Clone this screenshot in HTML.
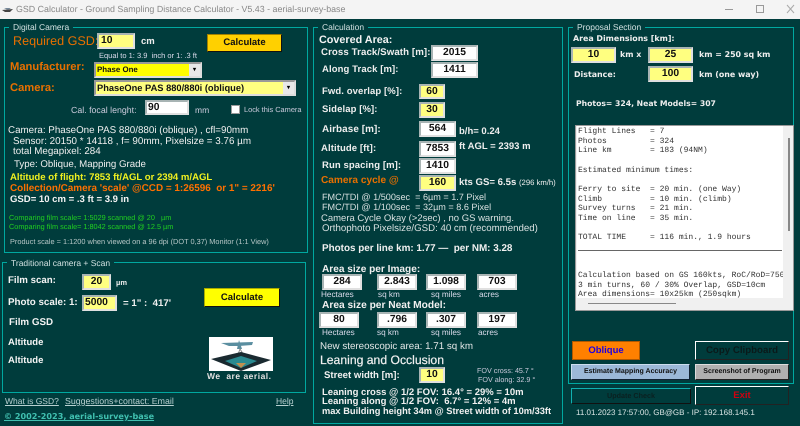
<!DOCTYPE html>
<html><head><meta charset="utf-8"><style>
html,body{margin:0;padding:0}
body{width:800px;height:426px;overflow:hidden;background:#003c3c;position:relative;font-family:"Liberation Sans",sans-serif;color:#fff;text-rendering:geometricPrecision}
.t{position:absolute;white-space:nowrap;line-height:1}
.b{font-weight:bold}
.o{color:#e87000}
.v{font-family:"DejaVu Sans",sans-serif;font-weight:bold;font-size:7.9px;color:#eee}
.p{position:absolute;border:1px solid #00a8a0;box-sizing:border-box}
.l{position:absolute;background:#003c3c;color:#d0e0e0;font-size:8.5px;line-height:1;padding:0 4px;white-space:nowrap}
.i{position:absolute;box-sizing:border-box;background:#fff;border:2px solid;border-color:#a8b4b4 #e0e0e0 #e0e0e0 #a8b4b4;color:#111;font-weight:bold;font-size:10.3px;text-align:center;white-space:nowrap}
.y{background:#ffff80}
.btn{position:absolute;box-sizing:border-box;text-align:center;font-weight:bold;white-space:nowrap}
.s{position:absolute;box-sizing:border-box;border:2px solid;border-color:#999 #ddd #ddd #999;color:#111;font-weight:bold;font-size:9.3px;line-height:12px;padding-left:1px;white-space:nowrap}
.ar{position:absolute;right:0;top:0;bottom:0;width:11px;background:#e8e8e8;text-align:center;font-size:6px;line-height:13px;color:#000}
.m{font-weight:bold;font-size:9.500px;color:#eee;letter-spacing:.1px}
u{text-decoration:underline}
</style></head><body>
<div style="position:absolute;left:0;top:0;width:800px;height:19px;background:#f4f4f4"></div>
<svg style="position:absolute;left:1px;top:4px" width="14" height="11"><path d="M1 6 L12 5 L9 8 L4 8Z" fill="#444"/><path d="M3 4 L10 4 L7 6Z" fill="#789"/></svg>
<div class="t" style="left:16px;top:5px;font-size:8.870px;color:#888">GSD Calculator - Ground Sampling Distance Calculator - V5.43 - aerial-survey-base</div>
<svg style="position:absolute;left:720px;top:3px" width="76" height="13"><path d="M5 6.5H13" stroke="#999" fill="none"/><rect x="36.500" y="2.500" width="7" height="7" stroke="#999" fill="none"/><path d="M67 2 L74 10 M74 2 L67 10" stroke="#aaa" fill="none"/></svg>

<!-- Digital Camera -->
<div class="p" style="left:4px;top:27px;width:304px;height:226px"></div>
<div class="l" style="left:9px;top:23px">Digital Camera</div>
<div class="t o" style="left:13px;top:35px;font-size:12.600px">Required GSD:</div>
<div class="i y" style="left:97px;top:33px;width:38px;height:16px;line-height:12px;text-align:left;padding-left:2px">10</div>
<div class="t b" style="left:141px;top:37px;font-size:9.500px;color:#eee">cm</div>
<div class="btn" style="left:207px;top:34px;width:75px;height:18px;background:#ffd000;border:1px solid #222;border-color:#a08000 #111 #111 #a08000;color:#111;font-size:9.500px;line-height:16px">Calculate</div>
<div class="t" style="left:99px;top:52px;font-size:7.500px;color:#dde">Equal to 1: 3.9&nbsp; inch or 1: .3 ft</div>
<div class="t b o" style="left:10px;top:62px;font-size:11.200px">Manufacturer:</div>
<div class="s" style="left:94px;top:62px;width:108px;height:16px;background:#ffff00;font-size:7.900px">Phase One<span class="ar">&#9662;</span></div>
<div class="t b o" style="left:10px;top:83px;font-size:11.200px">Camera:</div>
<div class="s" style="left:94px;top:80px;width:202px;height:16px;background:#ffff80">PhaseOne PAS 880/880i (oblique)<span class="ar">&#9662;</span></div>
<div class="t" style="left:71px;top:106px;font-size:8.800px;color:#ccd">Cal. focal lenght:</div>
<div class="i" style="left:145px;top:100px;width:44px;height:15px;line-height:11px;text-align:left;padding-left:1px">90</div>
<div class="t" style="left:195px;top:106px;font-size:8.500px;color:#ccd">mm</div>
<div style="position:absolute;left:231px;top:105px;width:9px;height:9px;background:#fff;border:1px solid #999;box-sizing:border-box"></div>
<div class="t" style="left:244px;top:106px;font-size:7.400px;color:#ccd">Lock this Camera</div>

<div class="t" style="left:8px;top:126px;font-size:9.800px;color:#f0f0f0">Camera: PhaseOne PAS 880/880i (oblique) , cfl=90mm</div>
<div class="t" style="left:13px;top:137px;font-size:9.850px;color:#f0f0f0">Sensor: 20150 * 14118 , f= 90mm, Pixelsize = 3.76 &micro;m</div>
<div class="t" style="left:13px;top:147px;font-size:9.800px;color:#f0f0f0">total Megapixel: 284</div>
<div class="t" style="left:14px;top:160px;font-size:9.700px;color:#f0f0f0">Type: Oblique, Mapping Grade</div>
<div class="t b" style="left:10px;top:173px;font-size:9.570px;color:#f0f020">Altitude of flight: 7853 ft/AGL or 2394 m/AGL</div>
<div class="t b" style="left:10px;top:184px;font-size:9.920px;color:#ff7000">Collection/Camera 'scale' @CCD = 1:26596&nbsp; or 1" = 2216'</div>
<div class="t b" style="left:10px;top:195px;font-size:9.550px;color:#f4f4f4">GSD= 10 cm = .3 ft = 3.9 in</div>
<div class="t" style="left:9px;top:214px;font-size:7.300px;color:#20d020">Comparing film scale= 1:5029 scanned @ 20&nbsp;&nbsp; &micro;m</div>
<div class="t" style="left:9px;top:223px;font-size:7.300px;color:#20d020">Comparing film scale= 1:8042 scanned @ 12.5 &micro;m</div>
<div class="t" style="left:10px;top:238px;font-size:7.360px;color:#b8c8c8">Product scale = 1:1200 when viewed on a 96 dpi (DOT 0,37) Monitor (1:1 View)</div>

<!-- Traditional -->
<div class="p" style="left:2px;top:262px;width:304px;height:131px"></div>
<div class="l" style="left:7px;top:259px">Traditional camera + Scan</div>
<div class="t b" style="left:8px;top:276px;font-size:9.700px;color:#f4f4f4">Film scan:</div>
<div class="i y" style="left:82px;top:274px;width:29px;height:16px;line-height:12px">20</div>
<div class="t b" style="left:116px;top:279px;font-size:7.500px;color:#eee">&micro;m</div>
<div class="t b" style="left:8px;top:298px;font-size:9.800px;color:#f4f4f4">Photo scale: 1:</div>
<div class="i y" style="left:82px;top:295px;width:35px;height:16px;line-height:12px;text-align:left;padding-left:1px">5000</div>
<div class="t b" style="left:123px;top:299px;font-size:9.700px;color:#eee">= 1" :&nbsp; 417'</div>
<div class="btn" style="left:204px;top:288px;width:76px;height:19px;background:#ffff00;border:1px solid #111;border-color:#aa0 #111 #111 #aa0;color:#111;font-size:9.500px;line-height:17px">Calculate</div>
<div class="t b" style="left:9px;top:318px;font-size:9.800px;color:#f4f4f4">Film GSD</div>
<div class="t b" style="left:8px;top:338px;font-size:9.500px;color:#f4f4f4">Altitude</div>
<div class="t b" style="left:8px;top:356px;font-size:9.500px;color:#f4f4f4">Altitude</div>
<svg style="position:absolute;left:209px;top:337px" width="64" height="34"><rect width="64" height="34" fill="#fff"/><path d="M12 6 L44 5 L43 8 L30 9 L20 9Z" fill="#5a8ea0"/><path d="M30 3 L33 12 L28 12Z" fill="#5a8ea0"/><path d="M31 12 L28 20 H36Z" fill="none" stroke="#888"/><path d="M2 22 L32 15 L62 23 L32 34Z" fill="#1a2a30"/><path d="M16 24 L32 19 L48 24 L32 31Z" fill="#2a8a90"/><path d="M27 26 H37 L32 31Z" fill="#c09050"/></svg>
<div class="t b" style="left:207px;top:372px;font-size:8.500px;color:#e0e0e0;letter-spacing:.5px">We&nbsp; are aerial.</div>

<div class="t" style="left:5px;top:397px;font-size:8.500px;color:#b8d0d0"><u>What is GSD?</u></div>
<div class="t" style="left:65px;top:397px;font-size:8.800px;color:#b8d0d0"><u>Suggestions+contact: Email</u></div>
<div class="t" style="left:276px;top:397px;font-size:8.500px;color:#b8d0d0"><u>Help</u></div>
<div class="t v" style="left:4px;top:412px;font-size:8.100px;color:#40c0b0"><u>&copy; 2002-2023, aerial-survey-base</u></div>

<!-- Calculation -->
<div class="p" style="left:313px;top:27px;width:250px;height:397px"></div>
<div class="l" style="left:318px;top:23px">Calculation</div>
<div class="t b" style="left:319px;top:35px;font-size:10.800px;color:#f4f4f4">Covered Area:</div>
<div class="t m" style="left:321px;top:48px;font-size:9.670px">Cross Track/Swath [m]:</div>
<div class="i" style="left:431px;top:45px;width:47px;height:16px;line-height:12px">2015</div>
<div class="t m" style="left:322px;top:65px">Along Track [m]:</div>
<div class="i" style="left:431px;top:62px;width:47px;height:16px;line-height:12px">1411</div>
<div class="t m" style="left:322px;top:87px">Fwd. overlap [%]:</div>
<div class="i y" style="left:419px;top:84px;width:26px;height:15px;line-height:11px">60</div>
<div class="t m" style="left:322px;top:105px">Sidelap [%]:</div>
<div class="i y" style="left:419px;top:102px;width:26px;height:16px;line-height:12px">30</div>
<div class="t m" style="left:322px;top:125px;font-size:9.900px">Airbase [m]:</div>
<div class="i" style="left:419px;top:121px;width:37px;height:16px;line-height:12px">564</div>
<div class="t b" style="left:459px;top:127px;font-size:9.500px;color:#eee">b/h= 0.24</div>
<div class="t m" style="left:321px;top:144px">Altitude [ft]:</div>
<div class="i" style="left:419px;top:141px;width:37px;height:16px;line-height:12px">7853</div>
<div class="t b" style="left:459px;top:142px;font-size:9.500px;color:#eee">ft AGL = 2393 m</div>
<div class="t m" style="left:322px;top:161px">Run spacing [m]:</div>
<div class="i" style="left:419px;top:158px;width:37px;height:16px;line-height:12px">1410</div>
<div class="t b" style="left:321px;top:176px;font-size:10.100px;color:#e87000">Camera cycle @</div>
<div class="i y" style="left:419px;top:175px;width:37px;height:16px;line-height:12px">160</div>
<div class="t b" style="left:459px;top:178px;font-size:9.600px;color:#eee">kts GS= 6.5s <span style="font-weight:normal;font-size:7.700px">(296 km/h)</span></div>
<div class="t" style="left:322px;top:193px;font-size:9.100px;color:#d8e0e0">FMC/TDI @ 1/500sec&nbsp; = 6&micro;m = 1.7 Pixel</div>
<div class="t" style="left:322px;top:203px;font-size:9.100px;color:#d8e0e0">FMC/TDI @ 1/100sec&nbsp; = 32&micro;m = 8.6 Pixel</div>
<div class="t" style="left:321px;top:214px;font-size:9.500px;color:#d8e0e0">Camera Cycle Okay (&gt;2sec) , no GS warning.</div>
<div class="t" style="left:322px;top:224px;font-size:9.700px;color:#d8e0e0">Orthophoto Pixelsize/GSD: 40 cm (recommended)</div>
<div class="t b" style="left:322px;top:244px;font-size:9.900px;color:#f0f0f0">Photos per line km: 1.77 &mdash;&nbsp; per NM: 3.28</div>
<div class="t b" style="left:322px;top:265px;font-size:10.100px;color:#f0f0f0">Area size per Image:</div>
<div class="i" style="left:322px;top:274px;width:40px;height:16px;line-height:12px">284</div>
<div class="i" style="left:377px;top:274px;width:40px;height:16px;line-height:12px">2.843</div>
<div class="i" style="left:426px;top:274px;width:40px;height:16px;line-height:12px">1.098</div>
<div class="i" style="left:477px;top:274px;width:40px;height:16px;line-height:12px">703</div>
<div class="t" style="left:321px;top:291px;font-size:8.200px;color:#dde">Hectares</div>
<div class="t" style="left:378px;top:291px;font-size:8.200px;color:#dde">sq km</div>
<div class="t" style="left:431px;top:291px;font-size:8.200px;color:#dde">sq miles</div>
<div class="t" style="left:479px;top:291px;font-size:8.200px;color:#dde">acres</div>
<div class="t b" style="left:322px;top:301px;font-size:10.200px;color:#f0f0f0">Area size per Neat Model:</div>
<div class="i" style="left:319px;top:312px;width:40px;height:16px;line-height:12px">80</div>
<div class="i" style="left:377px;top:312px;width:40px;height:16px;line-height:12px">.796</div>
<div class="i" style="left:426px;top:312px;width:40px;height:16px;line-height:12px">.307</div>
<div class="i" style="left:477px;top:312px;width:40px;height:16px;line-height:12px">197</div>
<div class="t" style="left:322px;top:329px;font-size:8.200px;color:#dde">Hectares</div>
<div class="t" style="left:377px;top:329px;font-size:8.200px;color:#dde">sq km</div>
<div class="t" style="left:431px;top:329px;font-size:8.200px;color:#dde">sq miles</div>
<div class="t" style="left:478px;top:329px;font-size:8.200px;color:#dde">acres</div>
<div class="t" style="left:320px;top:342px;font-size:9.800px;color:#e4e8e8">New stereoscopic area: 1.71 sq km</div>
<div class="t" style="left:320px;top:354px;font-size:12.200px;color:#f0f0f0;-webkit-text-stroke:.2px #f0f0f0">Leaning and Occlusion</div>
<div class="t b" style="left:324px;top:371px;font-size:9.600px;color:#f0f0f0">Street width [m]:</div>
<div class="i y" style="left:419px;top:367px;width:26px;height:16px;line-height:12px">10</div>
<div class="t" style="left:477px;top:367px;font-size:7.200px;color:#ccd">FOV cross: 45.7 &deg;</div>
<div class="t" style="left:478px;top:376px;font-size:7.200px;color:#ccd">FOV along: 32.9 &deg;</div>
<div class="t b" style="left:322px;top:388px;font-size:9.500px;color:#f0f0f0">Leaning cross @ 1/2 FOV: 16.4&deg; = 29% = 10m</div>
<div class="t b" style="left:322px;top:397px;font-size:9.500px;color:#f0f0f0">Leaning along @ 1/2 FOV:&nbsp; 6.7&deg; = 12% = 4m</div>
<div class="t b" style="left:322px;top:407px;font-size:9.300px;color:#f0f0f0">max Building height 34m @ Street width of 10m/33ft</div>

<!-- Proposal -->
<div class="p" style="left:568px;top:27px;width:226px;height:357px"></div>
<div class="l" style="left:573px;top:23px">Proposal Section</div>
<div class="t v" style="left:573px;top:35px">Area Dimensions [km]:</div>
<div class="i y" style="left:571px;top:47px;width:45px;height:16px;line-height:12px">10</div>
<div class="t v" style="left:620px;top:51px">km x</div>
<div class="i y" style="left:648px;top:47px;width:45px;height:16px;line-height:12px">25</div>
<div class="t v" style="left:699px;top:51px">km = 250 sq km</div>
<div class="t v" style="left:574px;top:71px">Distance:</div>
<div class="i y" style="left:648px;top:66px;width:45px;height:16px;line-height:12px">100</div>
<div class="t v" style="left:699px;top:71px">km (one way)</div>
<div class="t v" style="left:576px;top:100px;font-size:7.700px">Photos= 324, Neat Models= 307</div>

<div style="position:absolute;left:575px;top:125px;width:219px;height:186px;background:#f0f0f0;border:1px solid #999;box-sizing:border-box;overflow:hidden">
<pre style="position:absolute;left:1px;top:0;width:206px;height:172px;margin:0;padding:1px 1px;overflow:hidden;background:#fff;font-family:'Liberation Mono',monospace;font-size:8px;line-height:9.650px;color:#333;box-sizing:border-box">Flight Lines   = 7
Photos         = 324
Line km        = 183 (94NM)

Estimated minimum times:

Ferry to site  = 20 min. (one Way)
Climb          = 10 min. (climb)
Survey turns   = 21 min.
Time on line   = 35 min.

TOTAL TIME     = 116 min., 1.9 hours
<span style="display:block;border-top:1px solid #666;margin:7px 0 0;height:20px"></span>Calculation based on GS 160kts, RoC/RoD=750
3 min turns, 60 / 30% Overlap, GSD=10cm
Area dimensions= 10x25km (250sqkm)</pre>
<div style="position:absolute;left:212px;top:12px;width:2px;height:93px;background:#888"></div>
<div style="position:absolute;left:12px;top:177px;width:88px;height:1px;background:#888"></div>
</div>

<div class="btn" style="left:572px;top:341px;width:68px;height:19px;background:#ff8000;border:1px solid #b05800;color:#2000e0;font-size:9.500px;line-height:17px">Oblique</div>
<div class="btn" style="left:695px;top:341px;width:94px;height:19px;background:#003c3c;border:1px solid;border-color:#fff #222 #222 #fff;color:#0a1a1a;font-size:9.700px;line-height:17px">Copy Clipboard</div>
<div class="btn" style="left:571px;top:364px;width:119px;height:16px;background:#9cb8d8;border:1px solid;border-color:#cde #123 #123 #cde;color:#111;font-size:7px;line-height:14px">Estimate Mapping Accuracy</div>
<div class="btn" style="left:695px;top:364px;width:94px;height:16px;background:#b0b0b0;border:1px solid;border-color:#ddd #222 #222 #ddd;color:#111;font-size:7px;line-height:14px">Screenshot of Program</div>
<div class="btn" style="left:571px;top:388px;width:120px;height:16px;background:#003c3c;border:1px solid;border-color:#10b0b0 #111 #111 #10b0b0;color:#0a2020;font-size:7.200px;line-height:14px">Update Check</div>
<div class="btn" style="left:695px;top:386px;width:94px;height:19px;background:#003c3c;border:1px solid;border-color:#fff #222 #222 #fff;color:#d00010;font-size:9.500px;line-height:17px">Exit</div>
<div class="t" style="left:576px;top:409px;font-size:8px;color:#d8e4e4">11.01.2023 17:57:00, GB@GB - IP: 192.168.145.1</div>
</body></html>
